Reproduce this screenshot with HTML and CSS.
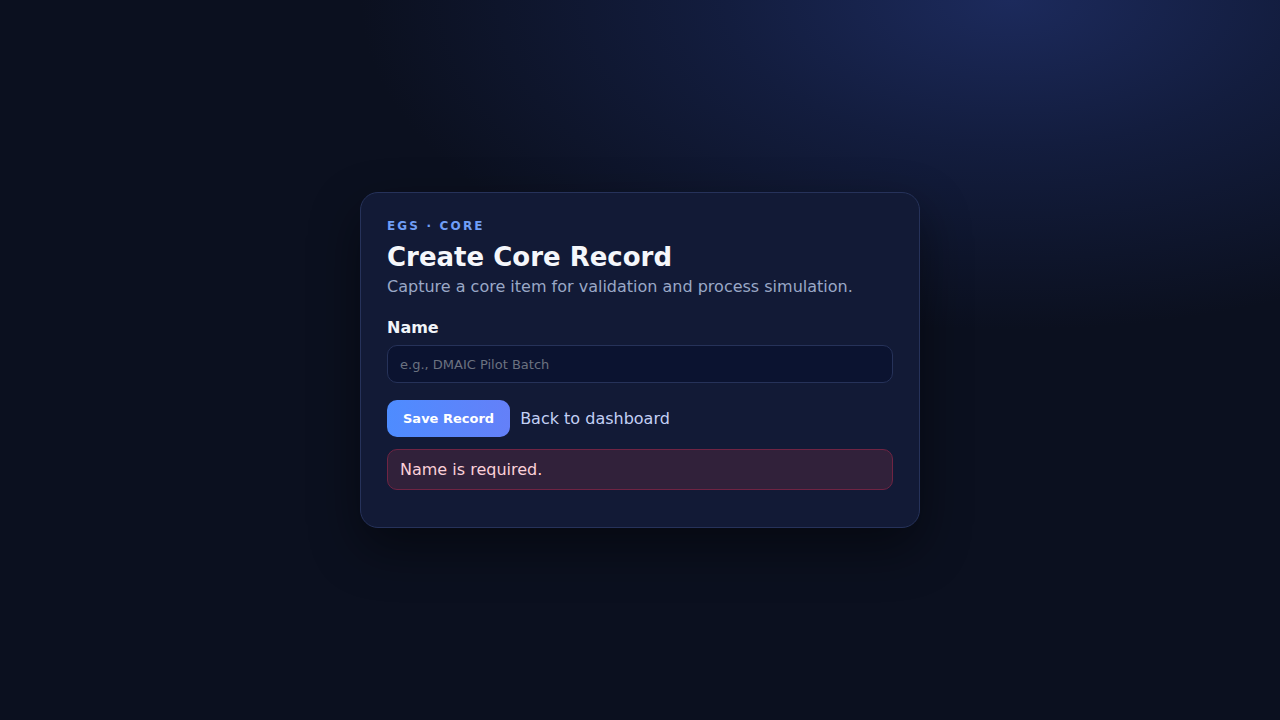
FILE: index.html
```html
<!DOCTYPE html>
<html lang="en">
<head>
<meta charset="utf-8">
<title>Create Core Record</title>
<link rel="stylesheet" href="styles.css">
</head>
<body>
<main class="page">
  <section class="card">
    <div class="eyebrow">EGS · CORE</div>
    <h1 class="title">Create Core Record</h1>
    <p class="subtitle">Capture a core item for validation and process simulation.</p>
    <form class="form">
      <label class="label" for="name">Name</label>
      <input class="input" id="name" type="text" placeholder="e.g., DMAIC Pilot Batch">
      <div class="actions">
        <button class="btn" type="button">Save Record</button>
        <a class="link" href="#">Back to dashboard</a>
      </div>
      <div class="error">Name is required.</div>
    </form>
  </section>
</main>
</body>
</html>
```
FILE: styles.css
```css
* { box-sizing: border-box; }
html, body { margin: 0; height: 100%; }
body {
  font-family: "DejaVu Sans", "Liberation Sans", sans-serif;
  background:
    radial-gradient(ellipse 650px 330px at 1010px 0px, rgba(28, 42, 92, 1) 0%, rgba(22, 34, 75, 0.7) 45%, rgba(11, 16, 32, 0) 100%),
    #0b101f;
  color: #f1f5f9;
}
.page {
  min-height: 100vh;
  display: flex;
  align-items: center;
  justify-content: center;
}
.card {
  width: 560px;
  height: 336px;
  background: #121a36;
  border: 1px solid #26325a;
  border-radius: 18px;
  padding: 26px 26px 0;
  box-shadow: 0 20px 50px rgba(0, 0, 0, 0.45);
}
.eyebrow {
  font-size: 12px;
  line-height: 15px;
  font-weight: 700;
  letter-spacing: 0.18em;
  color: #6f9ef7;
}
.title {
  margin: 7px 0 2px;
  font-size: 26px;
  line-height: 32px;
  font-weight: 700;
  color: #f5f7fb;
}
.subtitle {
  margin: 0;
  font-size: 16px;
  line-height: 24px;
  color: #9aa8c6;
}
.form {
  margin-top: 17px;
  display: flex;
  flex-direction: column;
}
.label {
  font-size: 16px;
  line-height: 24px;
  font-weight: 700;
  color: #f1f5f9;
}
.input {
  margin-top: 5px;
  height: 38px;
  width: 100%;
  background: #0b1330;
  border: 1px solid #263259;
  border-radius: 10px;
  padding: 0 12px;
  font-family: inherit;
  font-size: 13px;
  color: #e2e8f0;
  outline: none;
}
.input::placeholder { color: #6b7280; }
.actions {
  margin-top: 17px;
  display: flex;
  align-items: center;
  gap: 10px;
}
.btn {
  height: 37px;
  padding: 0 16px;
  border: 0;
  border-radius: 10px;
  background: linear-gradient(90deg, #4e8cff, #6480f8);
  color: #ffffff;
  font-family: inherit;
  font-size: 13px;
  font-weight: 700;
  cursor: pointer;
}
.link {
  font-size: 16px;
  color: #c3d0f5;
  text-decoration: none;
}
.error {
  margin-top: 12px;
  padding: 10px 12px;
  line-height: 19px;
  font-size: 16px;
  background: #31213a;
  border: 1px solid #6f2443;
  border-radius: 10px;
  color: #fbd0d8;
}
```
